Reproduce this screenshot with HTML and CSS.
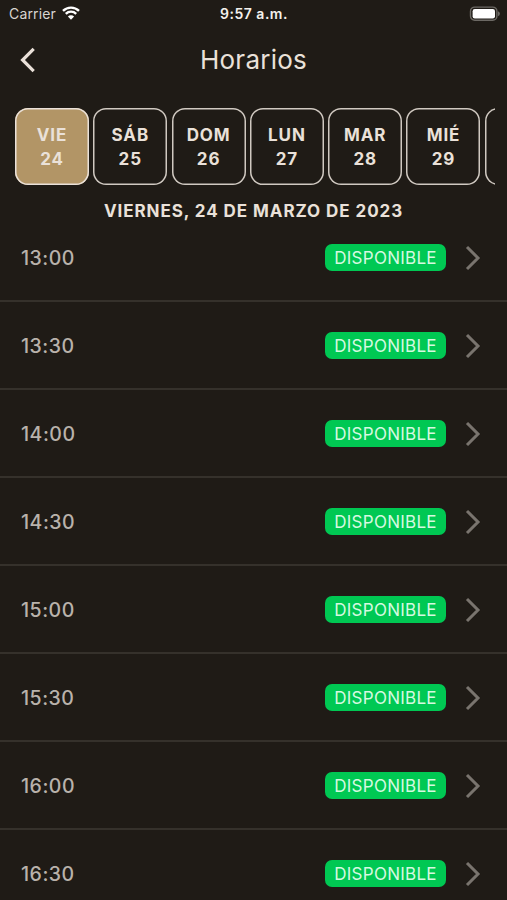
FILE: index.html
```html
<!DOCTYPE html>
<html lang="es">
<head>
    <meta charset="UTF-8">
    <meta name="viewport" content="width=device-width, initial-scale=1.0">
    <title>Horarios</title>
    <link rel="stylesheet" href="styles.css">
</head>
<body>
    <div class="status-bar">
        <div class="carrier">
            <span>Carrier</span>
            <svg class="wifi" width="18" height="14" viewBox="0 0 18 14">
                <path d="M1 4.9 A11.4 11.4 0 0 1 17 4.9" />
                <path d="M3.8 7.8 A7.4 7.4 0 0 1 14.2 7.8" />
                <path class="dot" d="M9 13.8 L5.9 10.6 A4.4 4.4 0 0 1 12.1 10.6 Z" />
            </svg>
        </div>
        <div class="clock">9:57 a.m.</div>
        <div class="battery">
            <svg width="31" height="16" viewBox="0 0 31 16">
                <rect x="1.5" y="1.1" width="26.4" height="13.2" rx="4.2" fill="none" stroke="#6c6964" stroke-width="1.4" />
                <rect x="3.6" y="3" width="22.4" height="9.4" rx="2.2" fill="#fff" />
                <path d="M29 5.2 Q30.9 6 30.9 7.7 Q30.9 9.4 29 10.2 Z" fill="#6c6964" />
            </svg>
        </div>
    </div>

    <header class="header">
        <svg class="back" width="16" height="26" viewBox="0 0 16 26">
            <path d="M13.7 1.9 L2.6 13 L13.7 24.1" />
        </svg>
        <h1>Horarios</h1>
    </header>

    <div class="days">
        <div class="day selected"><span>VIE</span><span>24</span></div>
        <div class="day"><span>SÁB</span><span>25</span></div>
        <div class="day"><span>DOM</span><span>26</span></div>
        <div class="day"><span>LUN</span><span>27</span></div>
        <div class="day"><span>MAR</span><span>28</span></div>
        <div class="day"><span>MIÉ</span><span>29</span></div>
        <div class="day"></div>
    </div>

    <h2 class="date">VIERNES, 24 DE MARZO DE 2023</h2>

    <div class="slots">
        <div class="slot">
            <span class="time">13:00</span>
            <span class="badge">DISPONIBLE</span>
            <svg class="arrow" width="16" height="26" viewBox="0 0 16 26"><path d="M2 2 L13 13 L2 24" /></svg>
        </div>
        <div class="slot">
            <span class="time">13:30</span>
            <span class="badge">DISPONIBLE</span>
            <svg class="arrow" width="16" height="26" viewBox="0 0 16 26"><path d="M2 2 L13 13 L2 24" /></svg>
        </div>
        <div class="slot">
            <span class="time">14:00</span>
            <span class="badge">DISPONIBLE</span>
            <svg class="arrow" width="16" height="26" viewBox="0 0 16 26"><path d="M2 2 L13 13 L2 24" /></svg>
        </div>
        <div class="slot">
            <span class="time">14:30</span>
            <span class="badge">DISPONIBLE</span>
            <svg class="arrow" width="16" height="26" viewBox="0 0 16 26"><path d="M2 2 L13 13 L2 24" /></svg>
        </div>
        <div class="slot">
            <span class="time">15:00</span>
            <span class="badge">DISPONIBLE</span>
            <svg class="arrow" width="16" height="26" viewBox="0 0 16 26"><path d="M2 2 L13 13 L2 24" /></svg>
        </div>
        <div class="slot">
            <span class="time">15:30</span>
            <span class="badge">DISPONIBLE</span>
            <svg class="arrow" width="16" height="26" viewBox="0 0 16 26"><path d="M2 2 L13 13 L2 24" /></svg>
        </div>
        <div class="slot">
            <span class="time">16:00</span>
            <span class="badge">DISPONIBLE</span>
            <svg class="arrow" width="16" height="26" viewBox="0 0 16 26"><path d="M2 2 L13 13 L2 24" /></svg>
        </div>
        <div class="slot">
            <span class="time">16:30</span>
            <span class="badge">DISPONIBLE</span>
            <svg class="arrow" width="16" height="26" viewBox="0 0 16 26"><path d="M2 2 L13 13 L2 24" /></svg>
        </div>
    </div>
</body>
</html>
```

FILE: styles.css
```css
* {
    box-sizing: border-box;
}
body {
    margin: 0;
    height: 900px;
    overflow: hidden;
    display: flex;
    flex-direction: column;
    background-color: #1f1b16;
    color: #eae1d9;
    font-family: Inter, "Liberation Sans", sans-serif;
}
.status-bar {
    flex: none;
    display: grid;
    grid-template-columns: 1fr auto 1fr;
    align-items: center;
    height: 27px;
    padding: 0 7px 0 9px;
    font-size: 14px;
}
.carrier {
    display: flex;
    align-items: center;
    gap: 6px;
    color: #d8d5d0;
    letter-spacing: 0.15px;
}
.wifi {
    fill: none;
    stroke: #fff;
    stroke-width: 2.4;
    margin-top: -1px;
}
.wifi .dot {
    fill: #fff;
    stroke: none;
}
.clock {
    font-weight: 600;
    color: #f4f1ed;
    letter-spacing: 0.5px;
    margin-right: 1px;
}
.battery {
    display: flex;
    justify-content: flex-end;
}
.header {
    flex: none;
    display: grid;
    grid-template-columns: 40px 1fr 40px;
    align-items: center;
    height: 65px;
    padding: 0 18px;
}
.back {
    fill: none;
    stroke: #eae1d9;
    stroke-width: 3.2;
    margin-left: 2px;
}
h1 {
    margin: 0;
    text-align: center;
    font-size: 26px;
    font-weight: 400;
    letter-spacing: 0.25px;
}
.days {
    flex: none;
    display: flex;
    gap: 4.3px;
    margin: 16px 12px 0 15px;
    overflow: hidden;
}
.day {
    flex: none;
    display: flex;
    flex-direction: column;
    justify-content: center;
    align-items: center;
    width: 74px;
    height: 77px;
    box-shadow: inset 0 0 0 1.5px #d0c9c1;
    border-radius: 13px;
    font-size: 17px;
    font-weight: 700;
    line-height: 24px;
    letter-spacing: 0.9px;
}
.day.selected {
    background-color: #b29566;
    box-shadow: inset 0 0 0 1.5px #eae1d9;
}
.date {
    flex: none;
    margin: 0;
    height: 29px;
    padding-top: 14px;
    text-align: center;
    font-size: 17px;
    line-height: 24px;
    font-weight: 700;
    letter-spacing: 0.93px;
}
.slots {
    flex: none;
}
.slot {
    display: flex;
    align-items: center;
    height: 88px;
    padding: 1px 26px 0 21px;
    border-bottom: 2px solid #35312b;
}
.time {
    flex: 1;
    padding-top: 1px;
    font-size: 19.5px;
    font-weight: 500;
    letter-spacing: 0.5px;
    color: #b9b2ab;
}
.badge {
    width: 121px;
    height: 27px;
    margin-right: 19px;
    border-radius: 7px;
    background-color: #00c853;
    color: #d5f9e0;
    font-size: 17px;
    line-height: 28px;
    letter-spacing: 0.25px;
    text-align: center;
}
.arrow {
    fill: none;
    stroke: #79746e;
    stroke-width: 3;
}
```
